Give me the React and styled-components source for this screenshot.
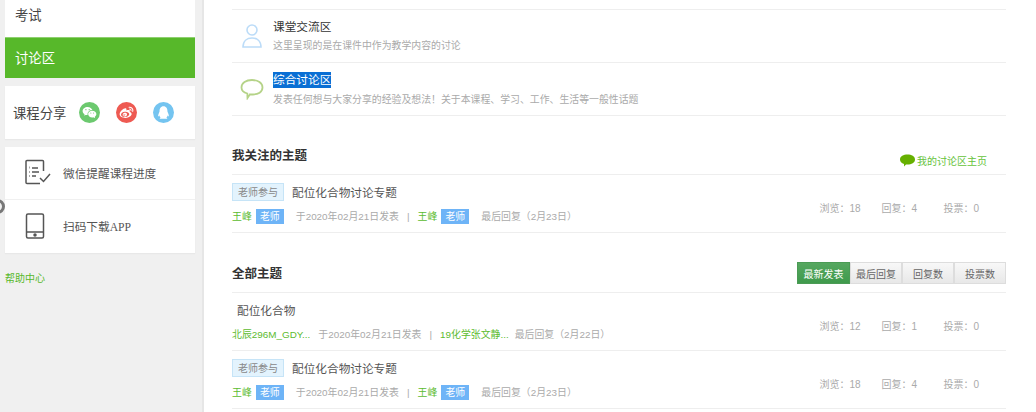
import styled, { createGlobalStyle } from "styled-components"
import { RiWechatFill, RiWeiboFill, RiQqFill } from "react-icons/ri"

const GlobalStyle = createGlobalStyle`
    html, body {
        margin: 0;
        padding: 0;
        height: 412px;
        overflow: hidden;
        background: #fff;
    }
    * {
        box-sizing: border-box;
    }
`;

const Page = styled.div`
    display: flex;
    width: 1036px;
    height: 412px;
    overflow: hidden;
    font-family: "Liberation Sans", "Noto Sans CJK SC", sans-serif;
    color: #444;
`;

const Sidebar = styled.aside`
    position: relative;
    width: 204px;
    flex-shrink: 0;
    padding: 0 7px 0 5px;
    background: #f0f0f0;
    border-right: 2px solid #e6e6e6;
`;

const NavCard = styled.div`
    background: #fff;
`;

const NavItem = styled.div`
    display: flex;
    align-items: center;
    height: ${p => (p.$active ? "41px" : "37px")};
    padding: ${p => (p.$active ? "0 10px 2px" : "0 10px 9px")};
    font-size: 13.33px;
    color: ${p => (p.$active ? "#fff" : "#444")};
    background: ${p => (p.$active ? "#57b82a" : "#fff")};
    border-top: ${p => (p.$active ? "1px solid #8fd070" : "none")};
`;

const ShareCard = styled.div`
    display: flex;
    align-items: center;
    height: 53px;
    margin-top: 8px;
    padding: 0 0 1px 8px;
    background: #fff;
    box-shadow: 0 1px 1px #e8e8e8;
`;

const ShareLabel = styled.span`
    width: 66px;
    font-size: 13.33px;
    color: #444;
`;

const ShareIcon = styled.span`
    display: flex;
    align-items: center;
    justify-content: center;
    width: 21px;
    height: 21px;
    margin-right: 16px;
    border-radius: 50%;
    font-size: 15px;
    color: #fff;
    background: ${p => p.$color};
`;

const ToolCard = styled.div`
    margin-top: 8px;
    background: #fff;
    box-shadow: 0 1px 1px #e8e8e8;
`;

const ToolRow = styled.div`
    display: flex;
    align-items: center;
    height: 53px;
    padding: 0 0 2px 20px;
    font-family: "Liberation Serif", "Noto Sans CJK SC", serif;
    font-size: 11.67px;
    color: #555;
    border-bottom: ${p => (p.$last ? "none" : "1px solid #f0f0f0")};
    svg {
        margin-right: 12px;
    }
`;

const HelpLink = styled.div`
    margin-top: 17px;
    font-size: 10px;
    color: #57b82a;
`;

const EdgeRing = styled.span`
    position: absolute;
    left: -10px;
    top: 199px;
    width: 15px;
    height: 15px;
    border: 3px solid #777;
    border-radius: 50%;
`;

const Main = styled.main`
    width: 802px;
    padding: 9px 0 0 28px;
`;

const Section = styled.div`
    border-top: 1px solid #eee;
`;

const ForumRow = styled.div`
    display: flex;
    align-items: center;
    height: 53px;
    padding-left: 8px;
    border-bottom: 1px solid #eee;
    svg {
        width: 24px;
        margin-right: 9px;
        flex-shrink: 0;
    }
`;

const ForumTitle = styled.div`
    font-size: 11.67px;
    line-height: 16px;
    color: #333;
    span {
        display: inline-block;
        background: ${p => (p.$selected ? "#0a6fd4" : "transparent")};
        color: ${p => (p.$selected ? "#fff" : "#333")};
    }
`;

const ForumDesc = styled.div`
    margin-top: ${p => p.$mt || "4px"};
    font-size: 9.9px;
    line-height: 14px;
    color: #aaa;
`;

const SectionHead = styled.div`
    display: flex;
    align-items: center;
    justify-content: space-between;
    height: ${p => p.$h};
    padding: ${p => p.$pad};
`;

const SectionTitle = styled.h3`
    margin: 0;
    padding-top: 2px;
    font-size: 12.5px;
    line-height: 18px;
    font-weight: 700;
    color: #333;
`;

const HomeLink = styled.div`
    display: flex;
    align-items: center;
    gap: 2px;
    padding-top: 10px;
    padding-right: 19px;
    font-size: 10px;
    color: #66c33a;
`;

const SortGroup = styled.div`
    display: flex;
    height: 22px;
`;

const SortButton = styled.div`
    display: flex;
    align-items: center;
    justify-content: center;
    width: ${p => p.$w};
    font-size: 10px;
    color: ${p => (p.$active ? "#fff" : "#666")};
    background: ${p => (p.$active ? "linear-gradient(#56a760, #3f9a4c)" : "linear-gradient(#f8f8f8, #e8e8e8)")};
    border: 1px solid ${p => (p.$active ? "#4b9b55" : "#ddd")};
`;

const TopicRow = styled.div`
    display: flex;
    align-items: center;
    justify-content: space-between;
    height: 58px;
    border-bottom: 1px solid #eee;
`;

const TopicMain = styled.div`
    display: flex;
    flex-direction: column;
    gap: 8px;
    padding-bottom: 1px;
`;

const TopicTitleLine = styled.div`
    display: flex;
    align-items: center;
    gap: 8px;
    height: 18px;
    padding-left: ${p => (p.$plain ? "5px" : "0")};
    font-size: 11.67px;
    color: #555;
`;

const TeacherFlag = styled.span`
    display: flex;
    align-items: center;
    justify-content: center;
    width: 52px;
    height: 18px;
    font-size: 10px;
    color: #888;
    background: #e3f3fd;
    border: 1px solid #c6e4f7;
`;

const MetaLine = styled.div`
    display: flex;
    align-items: center;
    height: 15px;
    font-size: 9.9px;
    color: #aaa;
`;

const UserName = styled.span`
    color: #5cbb30;
    margin-right: ${p => p.$mr || "4px"};
`;

const RoleTag = styled.span`
    display: flex;
    align-items: center;
    justify-content: center;
    width: 28px;
    height: 15px;
    margin-right: 12px;
    color: #fff;
    background: #6eb4f7;
`;

const Divider = styled.span`
    margin: 0 8px;
`;

const Stats = styled.div`
    display: flex;
    padding: 8px 27px 0 0;
    font-size: 10px;
    color: #aaa;
`;

const Stat = styled.span`
    width: ${p => p.$w || "auto"};
`;

const TopicStats = ({ views, replies, votes }) => (
    <Stats>
        <Stat $w="62px">浏览：{views}</Stat>
        <Stat $w="62px">回复：{replies}</Stat>
        <Stat>投票：{votes}</Stat>
    </Stats>
)

const TeacherTopic = () => (
    <TopicRow>
        <TopicMain>
            <TopicTitleLine>
                <TeacherFlag>老师参与</TeacherFlag>
                配位化合物讨论专题
            </TopicTitleLine>
            <MetaLine>
                <UserName>王峰</UserName>
                <RoleTag>老师</RoleTag>
                于2020年02月21日发表
                <Divider>|</Divider>
                <UserName>王峰</UserName>
                <RoleTag>老师</RoleTag>
                最后回复（2月23日）
            </MetaLine>
        </TopicMain>
        <TopicStats views={18} replies={4} votes={0} />
    </TopicRow>
)

const App = () => {
    return (
        <Page>
            <GlobalStyle />
            <Sidebar>
                <NavCard>
                    <NavItem>考试</NavItem>
                    <NavItem $active>讨论区</NavItem>
                </NavCard>
                <ShareCard>
                    <ShareLabel>课程分享</ShareLabel>
                    <ShareIcon $color="#6cc96f"><RiWechatFill /></ShareIcon>
                    <ShareIcon $color="#ee5a52"><RiWeiboFill /></ShareIcon>
                    <ShareIcon $color="#74c4f0"><RiQqFill /></ShareIcon>
                </ShareCard>
                <ToolCard>
                    <ToolRow>
                        <svg width="26" height="26" viewBox="0 0 26 26" fill="none" stroke="#555" strokeWidth="1.5">
                            <path d="M18.500 12V2.500a1 1 0 0 0-1-1H2a1 1 0 0 0-1 1v21a1 1 0 0 0 1 1H15" />
                            <path d="M7 9h6M7 13h7M7 17h4" />
                            <path d="M4 8.500h.5M4 13h.5M4 17h.5" strokeWidth="2" />
                            <path d="M15 19l3.500 3.500L25 15" />
                        </svg>
                        微信提醒课程进度
                    </ToolRow>
                    <ToolRow $last>
                        <svg width="26" height="26" viewBox="0 0 26 26" fill="none" stroke="#555" strokeWidth="1.5">
                            <rect x="1.500" y="1" width="17" height="24" rx="1.500" />
                            <path d="M1.500 19h17" />
                            <circle cx="10" cy="22" r="1" fill="#555" />
                        </svg>
                        扫码下载APP
                    </ToolRow>
                </ToolCard>
                <HelpLink>帮助中心</HelpLink>
                <EdgeRing />
            </Sidebar>
            <Main>
                <Section>
                    <ForumRow>
                        <svg height="26" viewBox="0 0 24 26" fill="none" stroke="#bcdcf8" strokeWidth="1.6">
                            <circle cx="12" cy="7" r="5" />
                            <path d="M3 24c0-6 4-9 9-9s9 3 9 9z" />
                        </svg>
                        <div>
                            <ForumTitle><span>课堂交流区</span></ForumTitle>
                            <ForumDesc>这里呈现的是在课件中作为教学内容的讨论</ForumDesc>
                        </div>
                    </ForumRow>
                    <ForumRow>
                        <svg height="22" viewBox="0 0 24 22" fill="none" stroke="#b5d388" strokeWidth="1.8">
                            <path d="M12 2c6 0 10.500 3 10.500 7.500S18 16.500 13 16.500c-1 0-2 0-3-.2L7.500 20l-.2-4.500C3.500 14.500 1.500 12 1.500 9.500 1.500 5 6 2 12 2z" />
                        </svg>
                        <div>
                            <ForumTitle $selected><span>综合讨论区</span></ForumTitle>
                            <ForumDesc $mt="5px">发表任何想与大家分享的经验及想法！关于本课程、学习、工作、生活等一般性话题</ForumDesc>
                        </div>
                    </ForumRow>
                </Section>
                <SectionHead $h="58px" $pad="24px 0 4px">
                    <SectionTitle>我关注的主题</SectionTitle>
                    <HomeLink>
                        <svg width="15" height="13" viewBox="0 0 15 13" fill="#66b000">
                            <path d="M7.500 .5C11.500 .5 15 2.300 15 5.500S11.500 10.500 7.500 10.500c-.5 0-1 0-1.500-.1L4 12.500V10C1.500 9.300 0 7.600 0 5.500 0 2.300 3.500 .5 7.500 .5z" />
                        </svg>
                        我的讨论区主页
                    </HomeLink>
                </SectionHead>
                <Section>
                    <TeacherTopic />
                </Section>
                <SectionHead $h="59px" $pad="29px 0 8px">
                    <SectionTitle>全部主题</SectionTitle>
                    <SortGroup>
                        <SortButton $active $w="53px">最新发表</SortButton>
                        <SortButton $w="52px">最后回复</SortButton>
                        <SortButton $w="52px">回复数</SortButton>
                        <SortButton $w="52px">投票数</SortButton>
                    </SortGroup>
                </SectionHead>
                <Section>
                    <TopicRow>
                        <TopicMain>
                            <TopicTitleLine $plain>配位化合物</TopicTitleLine>
                            <MetaLine>
                                <UserName $mr="8px">北辰296M_GDY...</UserName>
                                于2020年02月21日发表
                                <Divider>|</Divider>
                                <UserName $mr="6px">19化学张文静...</UserName>
                                最后回复（2月22日）
                            </MetaLine>
                        </TopicMain>
                        <TopicStats views={12} replies={1} votes={0} />
                    </TopicRow>
                    <TeacherTopic />
                </Section>
            </Main>
        </Page>
    )
}

export default App
